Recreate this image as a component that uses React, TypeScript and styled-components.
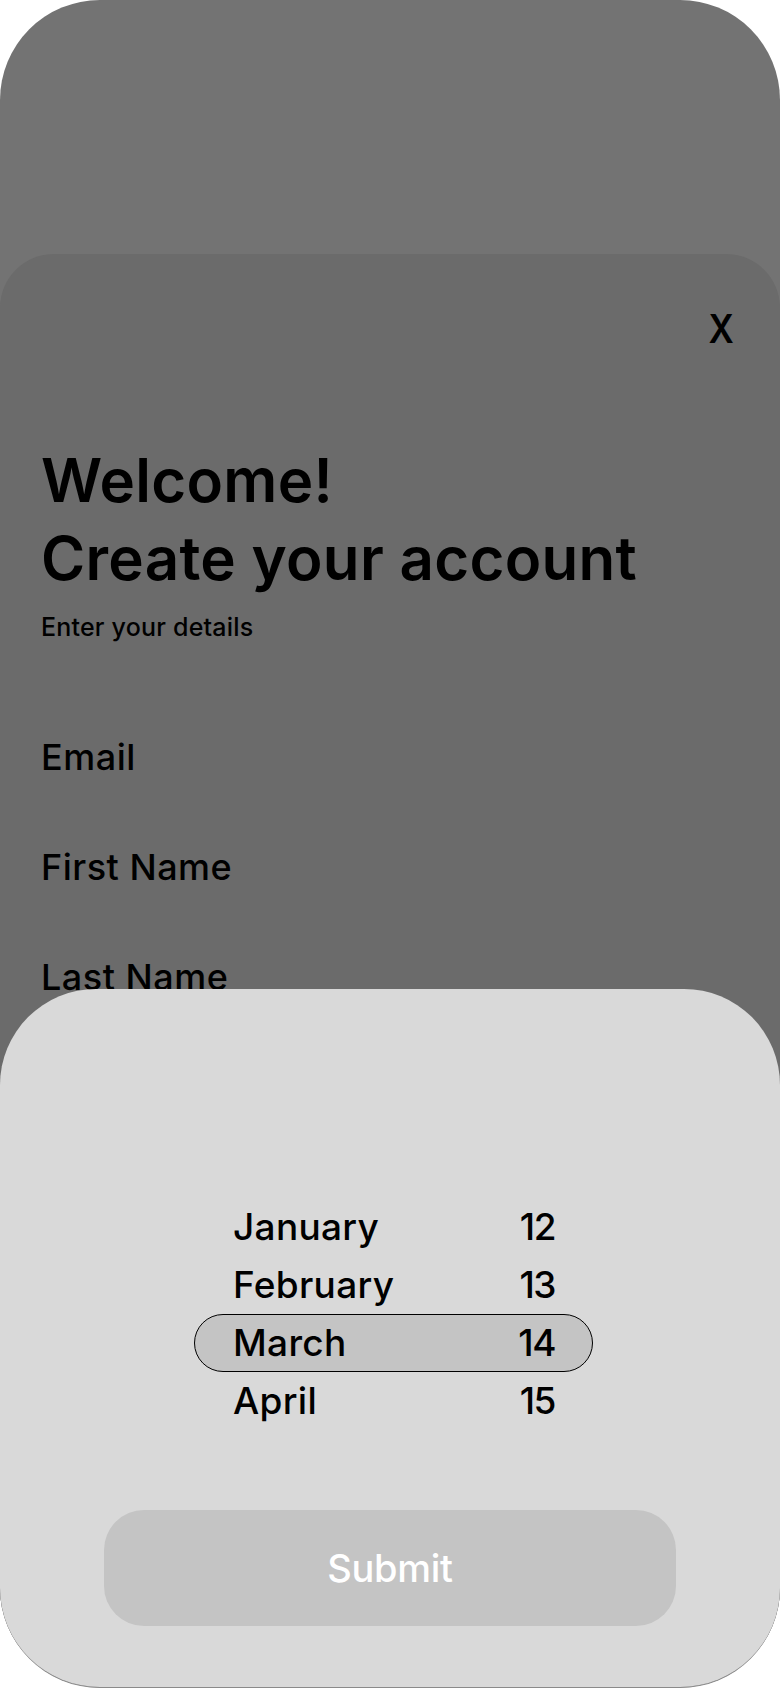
import React from "react";
import styled, { createGlobalStyle } from "styled-components";

const GlobalStyle = createGlobalStyle`
  * { box-sizing: border-box; }
  html, body { margin: 0; padding: 0; background: #ffffff; }
  body { font-family: Inter, "Noto Sans", "Liberation Sans", sans-serif; color: #000; }
`;

const Screen = styled.div`
  position: relative;
  width: 780px;
  height: 1688px;
  background: #737373;
  border-radius: 100px;
  border-bottom: 1px solid #8a8a8a;
  overflow: hidden;
  padding-top: 254px;
`;

const Modal = styled.section`
  height: 100%;
  background: #6b6b6b;
  border-radius: 54px 54px 0 0;
  padding: 55px 46px 0 41px;
  display: flex;
  flex-direction: column;
`;

const CloseRow = styled.div`
  display: flex;
  justify-content: flex-end;
`;

const CloseButton = styled.button`
  border: none;
  background: none;
  padding: 0;
  font-family: inherit;
  font-size: 40px;
  line-height: 40px;
  font-weight: 600;
  color: #000;
  transform: scaleX(0.88);
  transform-origin: right center;
`;

const Title = styled.h1`
  margin: 92px 0 0;
  font-size: 60px;
  line-height: 78px;
  font-weight: 600;
  letter-spacing: 0.3px;
`;

const Subtitle = styled.p`
  margin: 15px 0 0;
  font-size: 25px;
  line-height: 30px;
  font-weight: 500;
  letter-spacing: 0.2px;
`;

const Fields = styled.div`
  margin-top: 95px;
  display: flex;
  flex-direction: column;
  gap: 70px;
`;

const FieldLabel = styled.label`
  font-size: 36px;
  line-height: 40px;
  font-weight: 500;
  letter-spacing: 0.5px;
`;

const Sheet = styled.div`
  position: absolute;
  left: 0;
  right: 0;
  bottom: 0;
  height: 698px;
  background: #d9d9d9;
  border-radius: 96px 96px 0 0;
  padding-top: 209px;
  display: flex;
  flex-direction: column;
`;

const Picker = styled.div`
  width: 399px;
  margin-left: 194px;
  display: flex;
  flex-direction: column;
`;

const PickerRow = styled.div<{ $selected?: boolean }>`
  height: 58px;
  display: flex;
  align-items: center;
  justify-content: space-between;
  padding: 0 37px 0 38px;
  border-radius: 29px;
  border: 1.5px solid ${(p) => (p.$selected ? "#000" : "transparent")};
  background: ${(p) => (p.$selected ? "#c4c4c4" : "transparent")};
  font-size: 37px;
  line-height: 58px;
  font-weight: 500;
  letter-spacing: 0.3px;
`;

const Month = styled.span``;
const Day = styled.span`
  letter-spacing: -1.5px;
`;

const SubmitButton = styled.button`
  margin: 80px 0 0 104px;
  width: 572px;
  height: 116px;
  border: none;
  border-radius: 40px;
  background: #c4c4c4;
  color: #ffffff;
  font-family: inherit;
  font-size: 38px;
  font-weight: 500;
  letter-spacing: -0.3px;
  padding: 0;
`;

const rows = [
  { month: "January", day: "12" },
  { month: "February", day: "13" },
  { month: "March", day: "14", selected: true },
  { month: "April", day: "15" },
];

export default function App() {
  return (
    <>
      <GlobalStyle />
      <Screen>
        <Modal>
          <CloseRow>
            <CloseButton aria-label="Close">X</CloseButton>
          </CloseRow>
          <Title>
            Welcome!
            <br />
            Create your account
          </Title>
          <Subtitle>Enter your details</Subtitle>
          <Fields>
            <FieldLabel>Email</FieldLabel>
            <FieldLabel>First Name</FieldLabel>
            <FieldLabel>Last Name</FieldLabel>
          </Fields>
        </Modal>
        <Sheet>
          <Picker>
            {rows.map((r) => (
              <PickerRow key={r.month} $selected={r.selected}>
                <Month>{r.month}</Month>
                <Day>{r.day}</Day>
              </PickerRow>
            ))}
          </Picker>
          <SubmitButton>Submit</SubmitButton>
        </Sheet>
      </Screen>
    </>
  );
}
